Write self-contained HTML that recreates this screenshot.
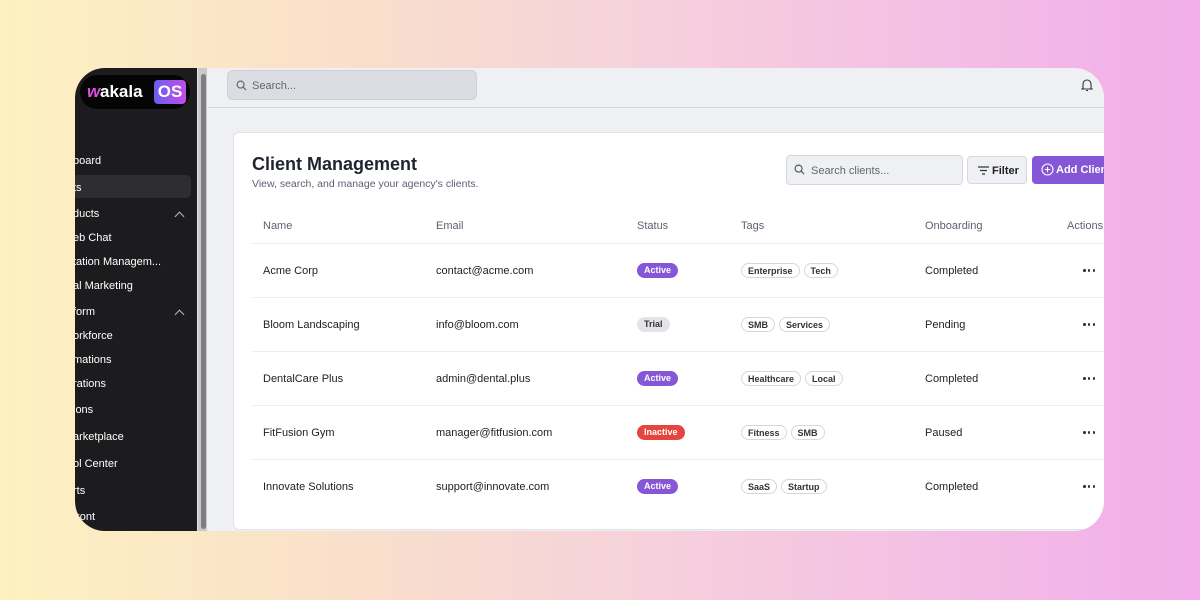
<!DOCTYPE html>
<html><head><meta charset="utf-8"><style>
*{margin:0;padding:0;box-sizing:border-box}
body{width:1200px;height:600px;overflow:hidden;font-family:"Liberation Sans",sans-serif;background:linear-gradient(90deg,#fdf1c0 0%,#f9dfcb 30%,#f6d0dc 55%,#f3bde5 80%,#f2aeea 100%);position:relative}
.win{position:absolute;left:75px;top:68px;width:1029px;height:463px;border-radius:30px;overflow:hidden;background:#eff0f3}
.side{position:absolute;left:0;top:0;width:122px;height:463px;background:#1c1c1e;color:#fff;font-size:11px}
.scroll{position:absolute;left:122px;top:0;width:10px;height:463px;background:#c9c9cc;border-left:1px solid #e6e6e6}
.scroll i{position:absolute;left:3px;top:6px;width:5px;height:455px;background:#7e7e80;border-radius:3px}
.side .it{position:absolute;left:-2px;white-space:nowrap}
.chev{position:absolute;left:101px;width:7px;height:7px;border-left:1.3px solid #bbb;border-top:1.3px solid #bbb;transform:rotate(45deg)}
.logo{position:absolute;left:5px;top:7px;width:110px;height:34px;border-radius:17px;background:#050505}
.top{position:absolute;left:133px;top:0;right:0;height:40px;background:#eff0f3;border-bottom:1px solid #d8d9de}
.sb{position:absolute;left:19px;top:2px;width:250px;height:30px;border-radius:6px;background:#dcdde2;border:1px solid #cfd0d5;font-size:11px;color:#666;padding:9px 0 0 24px}
.card{position:absolute;left:158px;top:64px;width:900px;height:398px;background:#fff;border:1px solid #e2e3e7;border-radius:6px}
.t{position:absolute;white-space:nowrap;font-size:11px;color:#222}
.h{color:#5b6270}
.line{position:absolute;left:18px;width:880px;height:1px;background:#eceef1}
.badge{position:absolute;height:15px;border-radius:8px;font-size:9px;font-weight:bold;padding:2px 7px;white-space:nowrap}
.tags{position:absolute;left:507px;display:flex;gap:4px}
.tag{height:15px;border-radius:8px;font-size:9px;font-weight:bold;border:1px solid #d5d7dc;padding:2px 6px 0;white-space:nowrap;color:#333;background:#fff}
.dots{position:absolute;left:849px;width:12px;height:3px;display:flex;justify-content:space-between}
.dots i{width:2.5px;height:2.5px;border-radius:50%;background:#333}
</style></head><body>
<div class="win">
 <div class="side">
  <div class="logo"><span style="position:absolute;left:7px;top:7px;font-size:17px;font-weight:bold;color:#d94fe0;font-style:italic">w</span><span style="position:absolute;left:20px;top:7px;font-size:17px;font-weight:bold;color:#fff">akala</span><span style="position:absolute;left:74px;top:5px;width:32px;height:24px;border-radius:4px;background:linear-gradient(90deg,#6a5df0,#c14fe6);font-size:17px;font-weight:bold;color:#fff;text-align:center;line-height:24px">OS</span></div>
  <div style="position:absolute;left:-10px;top:107px;width:126px;height:23px;background:#2e2e31;border-radius:5px"></div>
  <div class="it" style="top:87px">board</div>
  <div class="it" style="top:114px">ts</div>
  <div class="it" style="top:140px">ducts</div><div class="chev" style="top:145px"></div>
  <div class="it" style="top:164px">eb Chat</div>
  <div class="it" style="top:188px">tation Managem...</div>
  <div class="it" style="top:212px">al Marketing</div>
  <div class="it" style="top:238px">form</div><div class="chev" style="top:243px"></div>
  <div class="it" style="top:262px">orkforce</div>
  <div class="it" style="top:286px">mations</div>
  <div class="it" style="top:310px">rations</div>
  <div class="it" style="top:336px">ions</div>
  <div class="it" style="top:363px">arketplace</div>
  <div class="it" style="top:390px">ol Center</div>
  <div class="it" style="top:417px">rts</div>
  <div class="it" style="top:443px">front</div>
 </div>
 <div class="scroll"><i></i></div>
 <div class="top">
  <div class="sb"><svg style="position:absolute;left:8px;top:9px" width="11" height="11" viewBox="0 0 12 12"><circle cx="5" cy="5" r="3.8" fill="none" stroke="#666" stroke-width="1.3"/><path d="M8 8l3 3" stroke="#666" stroke-width="1.3"/></svg>Search...</div>
  <svg style="position:absolute;left:873px;top:10px" width="12" height="14" viewBox="0 0 12 14"><path d="M2 10V6a4 4 0 0 1 8 0v4l1 1H1z" fill="none" stroke="#333" stroke-width="1.1"/><path d="M5 12.5h2" stroke="#333" stroke-width="1.1"/></svg>
 </div>
 <div class="card">
  <div class="t" style="left:18px;top:21px;font-size:18px;font-weight:bold;color:#1f2430">Client Management</div>
  <div class="t h" style="left:18px;top:45px;font-size:10.5px">View, search, and manage your agency's clients.</div>
  <div style="position:absolute;left:552px;top:22px;width:177px;height:30px;border:1px solid #d6d8dd;border-radius:4px;background:#eff0f3;font-size:11px;color:#666;padding:9px 0 0 24px"><svg style="position:absolute;left:7px;top:8px" width="11" height="11" viewBox="0 0 12 12"><circle cx="5" cy="5" r="3.8" fill="none" stroke="#555" stroke-width="1.3"/><path d="M8 8l3 3" stroke="#555" stroke-width="1.3"/></svg>Search clients...</div>
  <div style="position:absolute;left:733px;top:23px;width:60px;height:28px;border:1px solid #d6d8dd;border-radius:4px;background:#eff0f3;font-size:11px;color:#222;padding:8px 0 0 24px;font-weight:bold"><svg style="position:absolute;left:10px;top:9px" width="11" height="9" viewBox="0 0 11 9"><path d="M0 1h11M2 4.5h7M4 8h3" stroke="#333" stroke-width="1.2"/></svg>Filter</div>
  <div style="position:absolute;left:798px;top:23px;width:110px;height:28px;border-radius:4px;background:#8556d6;font-size:11px;color:#fff;padding:8px 0 0 24px;font-weight:bold"><svg style="position:absolute;left:9px;top:7px" width="13" height="13" viewBox="0 0 13 13"><circle cx="6.5" cy="6.5" r="5.5" fill="none" stroke="#fff" stroke-width="1.1"/><path d="M6.5 3.8v5.4M3.8 6.5h5.4" stroke="#fff" stroke-width="1.1"/></svg>Add Client</div>
  <div class="t h" style="left:29px;top:87px">Name</div>
  <div class="t h" style="left:202px;top:87px">Email</div>
  <div class="t h" style="left:403px;top:87px">Status</div>
  <div class="t h" style="left:507px;top:87px">Tags</div>
  <div class="t h" style="left:691px;top:87px">Onboarding</div>
  <div class="t h" style="left:833px;top:87px">Actions</div>
  <div class="line" style="top:110px"></div>
  <div class="t" style="left:29px;top:132px">Acme Corp</div><div class="t" style="left:202px;top:132px">contact@acme.com</div>
  <div class="badge" style="left:403px;top:130px;background:#8556d6;color:#fff">Active</div>
  <div class="tags" style="top:130px"><div class="tag">Enterprise</div><div class="tag">Tech</div></div>
  <div class="t" style="left:691px;top:132px">Completed</div><div class="dots" style="top:136px"><i></i><i></i><i></i></div>
  <div class="line" style="top:164px"></div>
  <div class="t" style="left:29px;top:186px">Bloom Landscaping</div><div class="t" style="left:202px;top:186px">info@bloom.com</div>
  <div class="badge" style="left:403px;top:184px;background:#e3e4e8;color:#333">Trial</div>
  <div class="tags" style="top:184px"><div class="tag">SMB</div><div class="tag">Services</div></div>
  <div class="t" style="left:691px;top:186px">Pending</div><div class="dots" style="top:190px"><i></i><i></i><i></i></div>
  <div class="line" style="top:218px"></div>
  <div class="t" style="left:29px;top:240px">DentalCare Plus</div><div class="t" style="left:202px;top:240px">admin@dental.plus</div>
  <div class="badge" style="left:403px;top:238px;background:#8556d6;color:#fff">Active</div>
  <div class="tags" style="top:238px"><div class="tag">Healthcare</div><div class="tag">Local</div></div>
  <div class="t" style="left:691px;top:240px">Completed</div><div class="dots" style="top:244px"><i></i><i></i><i></i></div>
  <div class="line" style="top:272px"></div>
  <div class="t" style="left:29px;top:294px">FitFusion Gym</div><div class="t" style="left:202px;top:294px">manager@fitfusion.com</div>
  <div class="badge" style="left:403px;top:292px;background:#e5443f;color:#fff">Inactive</div>
  <div class="tags" style="top:292px"><div class="tag">Fitness</div><div class="tag">SMB</div></div>
  <div class="t" style="left:691px;top:294px">Paused</div><div class="dots" style="top:298px"><i></i><i></i><i></i></div>
  <div class="line" style="top:326px"></div>
  <div class="t" style="left:29px;top:348px">Innovate Solutions</div><div class="t" style="left:202px;top:348px">support@innovate.com</div>
  <div class="badge" style="left:403px;top:346px;background:#8556d6;color:#fff">Active</div>
  <div class="tags" style="top:346px"><div class="tag">SaaS</div><div class="tag">Startup</div></div>
  <div class="t" style="left:691px;top:348px">Completed</div><div class="dots" style="top:352px"><i></i><i></i><i></i></div>
 </div>
</div>
</body></html>
